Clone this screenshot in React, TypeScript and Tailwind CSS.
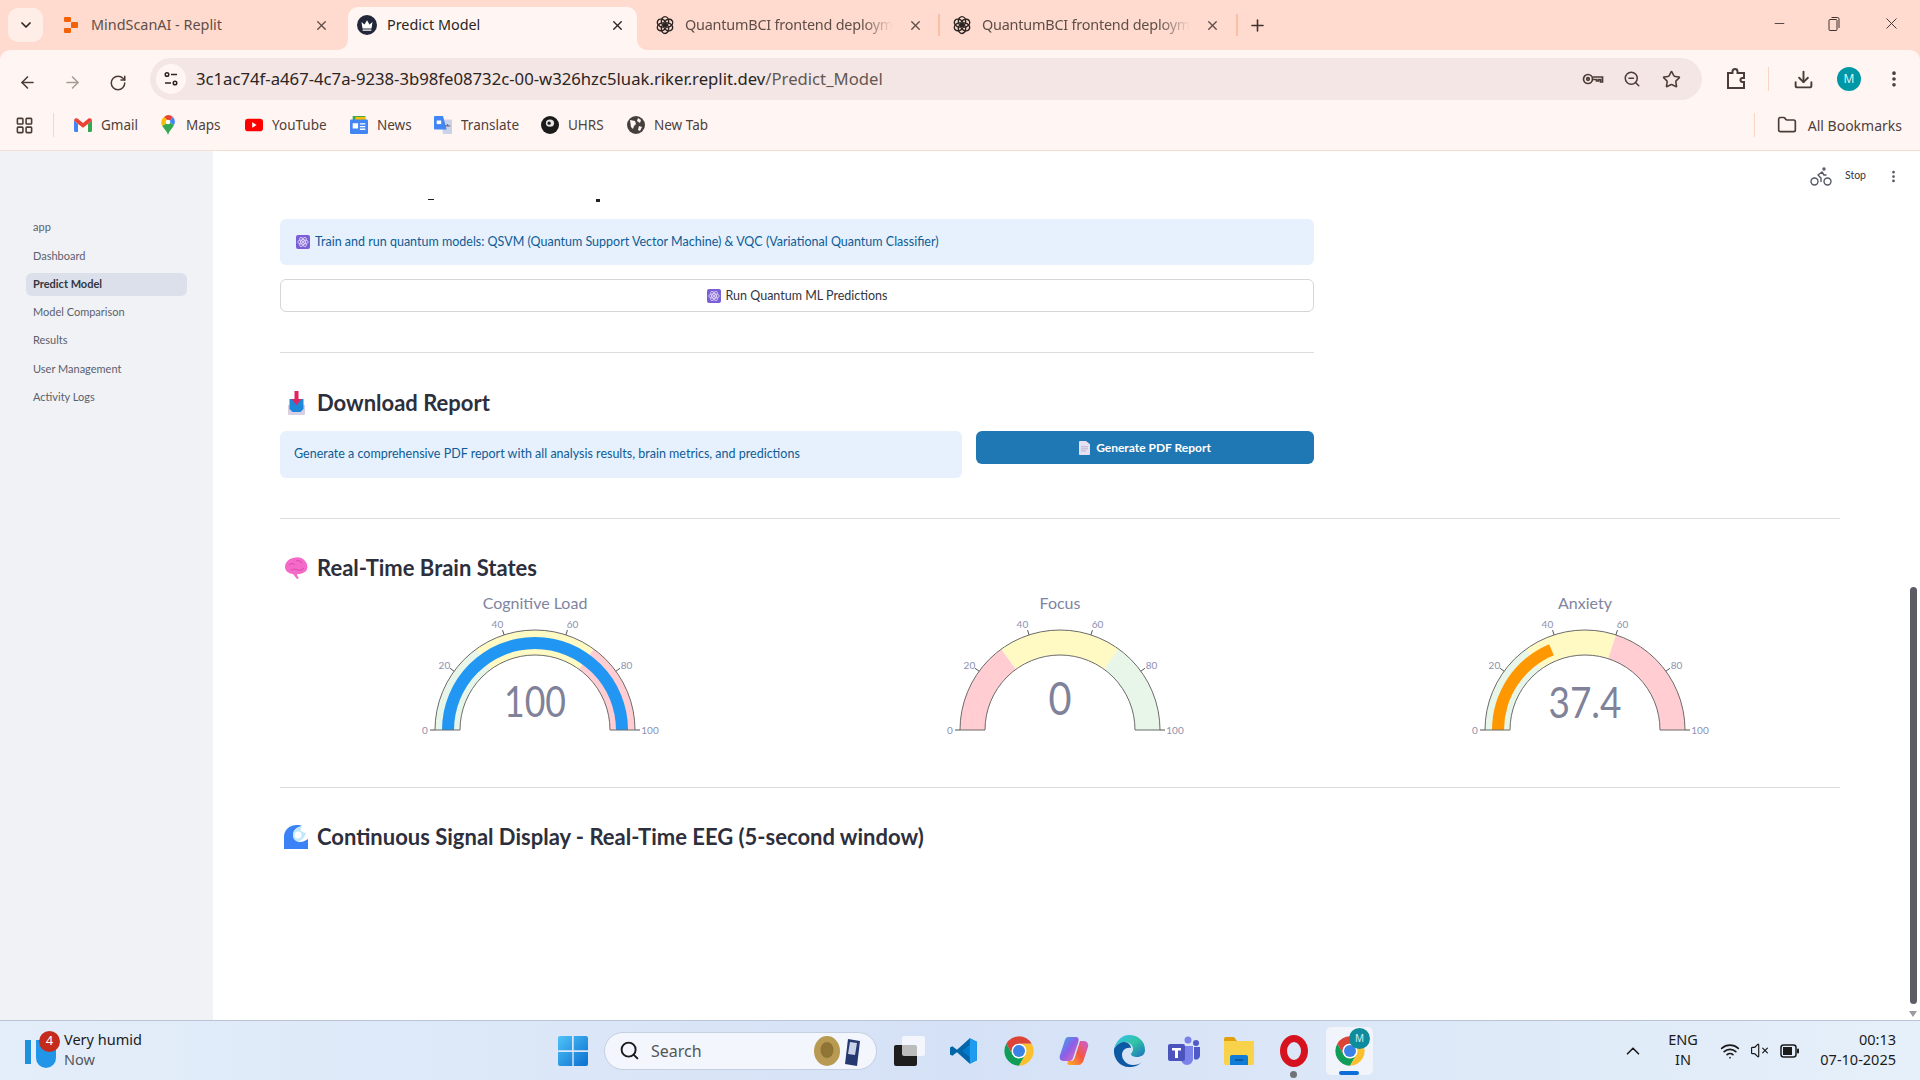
import React from "react";
import {
  ArrowLeft,
  ArrowRight,
  RotateCw,
  ZoomOut,
  Star,
  Download,
  EllipsisVertical,
  Folder,
  Plus,
  X,
  ChevronDown,
  ChevronUp,
  Minus,
  Search,
  Wifi,
  VolumeX,
  LayoutGrid,
  Bike,
} from "lucide-react";

const ui = "font-['Noto_Sans',sans-serif]";
const page = "font-['Lato','Noto_Sans',sans-serif]";

function ChromeLogo({ size = 32 }: { size?: number }) {
  return (
    <svg width={size} height={size} viewBox="0 0 48 48">
      <path fill="#db4437" d="M43.05 13A22 22 0 0 0 4.97 13L14.47 29.5A11 11 0 0 1 24 13Z" />
      <path fill="#0f9d58" d="M4.97 13A22 22 0 0 0 24 46L33.53 29.5A11 11 0 0 1 14.47 29.5Z" />
      <path fill="#fbc02d" d="M24 46A22 22 0 0 0 43.05 13L24 13A11 11 0 0 1 33.53 29.5Z" />
      <circle cx="24" cy="24" r="11" fill="#fff" />
      <circle cx="24" cy="24" r="9" fill="#3b82e6" />
    </svg>
  );
}

function OpenAiLogo() {
  return (
    <svg width="20" height="20" viewBox="0 0 24 24" fill="none" stroke="#2b2523" strokeWidth="1.7">
      <ellipse cx="12" cy="7.5" rx="4.4" ry="5.6" />
      <ellipse cx="12" cy="7.5" rx="4.4" ry="5.6" transform="rotate(60 12 12)" />
      <ellipse cx="12" cy="7.5" rx="4.4" ry="5.6" transform="rotate(120 12 12)" />
      <ellipse cx="12" cy="7.5" rx="4.4" ry="5.6" transform="rotate(180 12 12)" />
      <ellipse cx="12" cy="7.5" rx="4.4" ry="5.6" transform="rotate(240 12 12)" />
      <ellipse cx="12" cy="7.5" rx="4.4" ry="5.6" transform="rotate(300 12 12)" />
    </svg>
  );
}

function ReplitLogo() {
  return (
    <svg width="16" height="16" viewBox="0 0 16 16" fill="#f26207">
      <rect x="1" y="0" width="7" height="5" rx="1" />
      <rect x="8" y="5" width="7" height="6" rx="1" />
      <rect x="1" y="11" width="7" height="5" rx="1" />
    </svg>
  );
}

function CrownLogo() {
  return (
    <svg width="20" height="20" viewBox="0 0 20 20">
      <circle cx="10" cy="10" r="10" fill="#23273a" />
      <path fill="#fff" d="M4.5 7l3 2.4L10 5.2l2.5 4.2 3-2.4-1 6.6h-9zM5.7 14.6h8.6v1.2H5.7z" />
    </svg>
  );
}

function AtomEmoji({ size = 14 }: { size?: number }) {
  return (
    <svg width={size} height={size} viewBox="0 0 14 14" fill="none">
      <rect width="14" height="14" rx="2" fill="#7a5fd6" />
      <g stroke="#e6def9" strokeWidth="0.8">
        <ellipse cx="7" cy="7" rx="5.2" ry="2.1" />
        <ellipse cx="7" cy="7" rx="5.2" ry="2.1" transform="rotate(60 7 7)" />
        <ellipse cx="7" cy="7" rx="5.2" ry="2.1" transform="rotate(120 7 7)" />
      </g>
      <circle cx="7" cy="7" r="1.1" fill="#e6def9" />
    </svg>
  );
}

function TrayEmoji() {
  return (
    <svg width="19" height="24" viewBox="0 0 19 24">
      <path fill="#d8cfe4" d="M1 14h17v9a1 1 0 0 1-1 1H2a1 1 0 0 1-1-1z" />
      <path fill="#1e88d8" d="M2.5 8h14v10l-3 3h-8l-3-3z" />
      <path fill="#e0245e" d="M7.5 0h4v8h3l-5 6-5-6h3z" />
    </svg>
  );
}

function BrainEmoji() {
  return (
    <svg width="24" height="24" viewBox="0 0 24 24">
      <path
        fill="#f56ac8"
        d="M1 11c0-4 3-8 8-9 5-2 10 0 12 3 3 3 3 8 1 10-2 2-5 3-7 3l-2 0c0 2 1 3 2 4l-2 1-4-5c-4 0-8-3-8-7z"
      />
      <path
        fill="none"
        stroke="#d948a8"
        strokeWidth="1"
        d="M5 9c2-2 4-2 6 0M12 5c2-1 5 0 6 2M7 14c2-1 5-1 7 0 2 1 4 0 6-2"
      />
    </svg>
  );
}

function WaveEmoji() {
  return (
    <svg width="24" height="24" viewBox="0 0 24 24">
      <path fill="#3b82f6" d="M0 24V12C0 5 5 0 13 0c2 0 4 0 5 1-5 1-9 4-9 9 0 4 3 7 7 7 3 0 5-1 8-3v10z" />
      <path fill="#bfe6fb" d="M9 10c0-5 4-8 9-9-1 2-2 3-1 5 2 1 3 2 5 2-1 2-1 3-2 4-2 3-5 5-7 4-3-1-4-3-4-6z" />
      <circle cx="14" cy="10" r="3.5" fill="#fff" />
    </svg>
  );
}

function DocEmoji() {
  return (
    <svg width="11" height="14" viewBox="0 0 11 17" preserveAspectRatio="none">
      <path fill="#e6e0f0" d="M0 1a1 1 0 0 1 1-1h6l4 4v12a1 1 0 0 1-1 1H1a1 1 0 0 1-1-1z" />
      <path stroke="#b8aed0" strokeWidth="1" d="M2 7h7M2 9.5h7M2 12h5" />
    </svg>
  );
}

function polar(cx: number, cy: number, r: number, v: number) {
  const a = Math.PI * (1 - v / 100);
  return [cx + r * Math.cos(a), cy - r * Math.sin(a)];
}

function sector(cx: number, cy: number, r0: number, r1: number, from: number, to: number) {
  const [ax, ay] = polar(cx, cy, r1, from);
  const [bx, by] = polar(cx, cy, r1, to);
  const [dx, dy] = polar(cx, cy, r0, to);
  const [ex, ey] = polar(cx, cy, r0, from);
  return `M${ax} ${ay}A${r1} ${r1} 0 0 1 ${bx} ${by}L${dx} ${dy}A${r0} ${r0} 0 0 0 ${ex} ${ey}Z`;
}

interface GaugeProps {
  title: string;
  value: number;
  label: string;
  barColor?: string;
  steps: [number, number, string][];
  valueY: number;
  valueSize: number;
  valueWidth: number;
}

// small nudges so the tick labels sit where plotly anchors them
const labelShift: Record<number, [number, number]> = {
  0: [0, 0],
  20: [0, 1],
  40: [-3, 1],
  60: [3, 1],
  80: [1, 1],
  100: [3, 0],
};

function Gauge({ title, value, label, barColor, steps, valueY, valueSize, valueWidth }: GaugeProps) {
  const cx = 200;
  const cy = 150;
  return (
    <div className="flex justify-center">
      <svg width="400" height="170" viewBox="0 0 400 170" className={page}>
        <text x={cx} y="29" textAnchor="middle" fontSize="16" fill="#7f84a0">
          {title}
        </text>
        {steps.map(([a, b, c]) => (
          <path key={a} d={sector(cx, cy, 75, 100, a, b)} fill={c} />
        ))}
        {barColor && <path d={sector(cx, cy, 81, 93, 0, value)} fill={barColor} />}
        <path d={sector(cx, cy, 75, 100, 0, 100)} fill="none" stroke="#6b6b6b" strokeWidth="1" />
        {[0, 20, 40, 60, 80, 100].map((t) => {
          const [x0, y0] = polar(cx, cy, 100, t);
          const [x1, y1] = polar(cx, cy, 105, t);
          const [lx, ly] = polar(cx, cy, t === 0 ? 110 : 112, t);
          const [sx, sy] = labelShift[t];
          return (
            <g key={t}>
              <line x1={x0} y1={y0} x2={x1} y2={y1} stroke="#555" strokeWidth="1" />
              <text x={lx + sx} y={ly + 4 + sy} textAnchor="middle" fontSize="10" fill="#8d90b0">
                {t}
              </text>
            </g>
          );
        })}
        <text
          x={cx}
          y={valueY}
          textAnchor="middle"
          fontSize={valueSize}
          fill="#7f8299"
          textLength={valueWidth}
          lengthAdjust="spacingAndGlyphs"
        >
          {label}
        </text>
      </svg>
    </div>
  );
}

function Heading({ icon, text }: { icon: React.ReactNode; text: string }) {
  return (
    <div className="flex h-[30px] items-center">
      <div className="flex w-[37px] justify-center pr-[6px] pl-[1px]">{icon}</div>
      <h2 className="text-[22px] leading-[30px] font-bold text-[#2d2f3d]">{text}</h2>
    </div>
  );
}

function Tab({
  icon,
  title,
  active,
  fade,
}: {
  icon: React.ReactNode;
  title: string;
  active?: boolean;
  fade?: boolean;
}) {
  return (
    <div
      className={`relative flex h-[43px] w-[289px] items-center rounded-t-[10px] pb-[7px] pl-[8px] pr-[12px] ${
        active ? "bg-[#fff6f3]" : ""
      }`}
    >
      {active && (
        <>
          <svg width="10" height="10" viewBox="0 0 10 10" className="absolute bottom-0 -left-[10px]">
            <path fill="#fff6f3" d="M10 0v10H0a10 10 0 0 0 10-10z" />
          </svg>
          <svg width="10" height="10" viewBox="0 0 10 10" className="absolute -right-[10px] bottom-0">
            <path fill="#fff6f3" d="M0 0v10h10A10 10 0 0 1 0 0z" />
          </svg>
        </>
      )}
      <div className="flex w-[22px] justify-center">{icon}</div>
      <span
        className={`ml-[9px] overflow-hidden text-[14.4px] whitespace-nowrap ${
          active ? "text-[#2b2523]" : "text-[#5f4e48]"
        } ${fade ? "w-[208px] tracking-[-0.2px] [mask-image:linear-gradient(to_right,black_85%,transparent)]" : ""}`}
      >
        {title}
      </span>
      <X size={15} strokeWidth={2.2} className={`ml-auto ${active ? "text-[#2b2523]" : "text-[#5f4e48]"}`} />
    </div>
  );
}

function Bookmark({ icon, label, width }: { icon: React.ReactNode; label: string; width: string }) {
  return (
    <div className={`flex items-center ${width}`}>
      <div className="flex w-[18px] justify-center">{icon}</div>
      <span className="ml-[9px] text-[13.5px] text-[#4f403b]">{label}</span>
    </div>
  );
}

const sideItems = ["app", "Dashboard", "Predict Model", "Model Comparison", "Results", "User Management", "Activity Logs"];

function App() {
  return (
    <div className={`flex h-screen w-[1920px] flex-col overflow-hidden bg-[#ffdbcf] ${ui}`}>
      {/* tab strip */}
      <div className="flex h-[50px] shrink-0 items-end pl-[8px]">
        <div className="mb-[8px] flex h-[34px] w-[35px] items-center justify-center rounded-[10px] bg-[#ffeee8]">
          <ChevronDown size={16} strokeWidth={2.6} className="text-[#2b2523]" />
        </div>
        <div className="ml-[9px]">
          <Tab icon={<ReplitLogo />} title="MindScanAI - Replit" />
        </div>
        <div className="ml-[7px]">
          <Tab icon={<CrownLogo />} title="Predict Model" active />
        </div>
        <div className="ml-[9px]">
          <Tab icon={<OpenAiLogo />} title="QuantumBCI frontend deployment" fade />
        </div>
        <div className="mb-[14px] ml-[3px] h-[22px] w-[2px] bg-[#fbbfa9]" />
        <div className="ml-[3px]">
          <Tab icon={<OpenAiLogo />} title="QuantumBCI frontend deployment" fade />
        </div>
        <div className="mb-[14px] ml-[4px] h-[22px] w-[2px] bg-[#fbbfa9]" />
        <Plus size={19} strokeWidth={2} className="mb-[15px] ml-[10px] text-[#3f332f]" />
        <div className="mb-[17px] ml-auto flex items-center text-[#3f332f]">
          <Minus size={15} strokeWidth={1.4} />
          <svg width="14" height="16" viewBox="0 0 14 16" fill="none" stroke="#3f332f" className="ml-[40px]">
            <rect x="2" y="3.5" width="8" height="11" rx="1" />
            <path d="M4.5 1.5h6a1.5 1.5 0 0 1 1.500 1.500v9" />
          </svg>
          <X size={19} strokeWidth={1.2} className="mr-[19px] ml-[41px]" />
        </div>
      </div>

      {/* toolbar */}
      <div className="flex h-[50px] shrink-0 items-end rounded-t-[10px] bg-[#fff6f3] pl-[18px]">
        <div className="mb-[8px] flex items-center">
          <ArrowLeft size={19} className="text-[#4b3c37]" />
          <ArrowRight size={19} className="ml-[26px] text-[#a99a95]" />
          <RotateCw size={18} className="ml-[27px] text-[#4b3c37]" />
        </div>
        <div className="ml-[23px] flex h-[42px] w-[1552px] items-center rounded-full bg-[#f3e6e4] pl-[6px]">
          <div className="flex h-[30px] w-[30px] items-center justify-center rounded-full bg-[#fff6f3]">
            <svg width="16" height="16" viewBox="0 0 16 16" fill="none" stroke="#2b2523" strokeWidth="1.5">
              <circle cx="4" cy="3.500" r="1.800" />
              <path d="M8 3.500h6M2 12h6" />
              <circle cx="12" cy="12" r="1.800" />
            </svg>
          </div>
          <span className="ml-[10px] text-[16.7px] text-[#2b2523]">
            3c1ac74f-a467-4c7a-9238-3b98fe08732c-00-w326hzc5luak.riker.replit.dev
            <span className="text-[#655852]">/Predict_Model</span>
          </span>
          <div className="ml-auto mr-[21px] flex items-center text-[#4b3c37]">
            <svg width="22" height="14" viewBox="0 0 22 14" fill="none" stroke="#4b3c37" strokeWidth="1.700">
              <circle cx="6" cy="7" r="4.500" />
              <circle cx="6" cy="7" r="1.300" />
              <path d="M10.500 5h10v5h-2v-2.500h-2V9h-2V7.500h-4" />
            </svg>
            <ZoomOut size={18} className="ml-[19px]" />
            <Star size={19} className="ml-[21px]" />
          </div>
        </div>
        <div className="mb-[9px] ml-[24px] flex items-center text-[#4b3c37]">
          <svg width="20" height="24" viewBox="0 0 20 24" fill="none" stroke="#4b3c37" strokeWidth="2">
            <path d="M2 6h4.500V4.500a2.500 2.500 0 0 1 5 0V6H18v5h-1.500a2 2 0 0 0 0 4H18v6H2z" />
          </svg>
          <div className="ml-[22px] h-[24px] w-[1px] bg-[#fbd4c6]" />
          <Download size={21} className="ml-[24px]" strokeWidth={2.2} />
          <div className="ml-[23px] flex h-[24px] w-[24px] items-center justify-center rounded-full bg-[#0097a7] text-[12px] text-[#d6f2f5]">
            M
          </div>
          <EllipsisVertical size={20} strokeWidth={2.4} className="ml-[23px]" />
        </div>
      </div>

      {/* bookmarks */}
      <div className="flex h-[51px] shrink-0 items-center border-b border-[#f8ddd3] bg-[#fff6f3] pl-[15px]">
        <LayoutGrid size={19} className="text-[#4b3c37]" strokeWidth={2} />
        <div className="ml-[19px] h-[24px] w-[1px] bg-[#fbd4c6]" />
        <div className="ml-[20px] flex items-center">
          <Bookmark
            width="w-[85px]"
            label="Gmail"
            icon={
              <svg width="18" height="14" viewBox="0 0 18 14">
                <path fill="#4285f4" d="M0 2.500v10a1.500 1.500 0 0 0 1.500 1.500H4V6z" />
                <path fill="#34a853" d="M18 2.500v10a1.500 1.500 0 0 1-1.500 1.500H14V6z" />
                <path fill="#ea4335" d="M0 2.500C0 .5 2 -.5 3.500.6L9 5l5.500-4.400C16 -.5 18 .5 18 2.500L14 6 9 9.800 4 6z" />
              </svg>
            }
          />
          <Bookmark
            width="w-[86px]"
            label="Maps"
            icon={
              <svg width="14" height="20" viewBox="0 0 14 20">
                <path fill="#ea4335" d="M7 0a7 7 0 0 1 5 2.100L8 7 3 2a7 7 0 0 1 4-2z" />
                <path fill="#4285f4" d="M12 2.100A7 7 0 0 1 13 10L8 7z" />
                <path fill="#fbbc04" d="M3 2a7 7 0 0 0-1.800 9L8 7z" />
                <path fill="#34a853" d="M1.200 11C3 14 6 16 7 20c1-4 4-6 6-10L8 7z" />
                <circle cx="7" cy="7" r="2.300" fill="#fff" />
              </svg>
            }
          />
          <Bookmark
            width="w-[105px]"
            label="YouTube"
            icon={
              <svg width="20" height="14" viewBox="0 0 20 14">
                <rect width="20" height="14" rx="3.500" fill="#f00" />
                <path fill="#fff" d="M8 4l5 3-5 3z" />
              </svg>
            }
          />
          <Bookmark
            width="w-[84px]"
            label="News"
            icon={
              <svg width="20" height="20" viewBox="0 0 20 20">
                <path fill="#34a853" d="M3 0h14v6H3z" />
                <path fill="#fbbc04" d="M6 1h11v5H6z" />
                <rect y="4" width="20" height="16" rx="1.500" fill="#4285f4" />
                <path fill="#fff" d="M3 8h6v6H3zM11 8h6v1.500h-6zM11 11h6v1.500h-6zM11 14h6v1.500h-6z" />
              </svg>
            }
          />
          <Bookmark
            width="w-[107px]"
            label="Translate"
            icon={
              <svg width="20" height="20" viewBox="0 0 20 20">
                <path fill="#c9d2e6" d="M8 4h11a1 1 0 0 1 1 1v14a1 1 0 0 1-1 1H10z" />
                <path fill="#4285f4" d="M1 0h9l4 15H1a1 1 0 0 1-1-1V1a1 1 0 0 1 1-1z" />
                <path fill="#fff" d="M3 5h5v4H3z" />
                <path stroke="#6b7280" strokeWidth="1.200" d="M12 11h6M15 9v2" />
              </svg>
            }
          />
          <Bookmark
            width="w-[86px]"
            label="UHRS"
            icon={
              <svg width="20" height="20" viewBox="0 0 20 20">
                <circle cx="10" cy="10" r="10" fill="#1b1b1b" />
                <ellipse cx="10" cy="8" rx="4.500" ry="4" fill="#e6e6e6" />
                <circle cx="9" cy="8" r="1.800" fill="#1b1b1b" />
              </svg>
            }
          />
          <Bookmark
            width="w-[90px]"
            label="New Tab"
            icon={
              <svg width="18" height="18" viewBox="0 0 18 18">
                <circle cx="9" cy="9" r="9" fill="#45403e" />
                <path fill="#fff6f3" d="M3 4l5 1 1 3-2 2-1 3-2-2zM11 2l3 2-1 3-3-2zM12 10l3 1-2 4-2-1z" />
              </svg>
            }
          />
        </div>
        <div className="ml-auto flex items-center pr-[18px]">
          <div className="h-[24px] w-[1px] bg-[#fbd4c6]" />
          <Folder size={20} className="ml-[22px] text-[#4b3c37]" />
          <span className="ml-[11px] text-[14px] text-[#4f403b]">All Bookmarks</span>
        </div>
      </div>

      {/* streamlit page */}
      <div className={`relative flex min-h-0 flex-1 bg-white ${page}`}>
        <aside className="flex w-[213px] shrink-0 flex-col bg-[#f0f2f6] pt-[65px] pl-[26px]">
          {sideItems.map((item) => (
            <div
              key={item}
              className={`mb-[5.300px] flex h-[23px] w-[161px] items-center rounded-[6px] pl-[7px] text-[11px] ${
                item === "Predict Model" ? "bg-[#dbe0ea] font-bold text-[#33353f]" : "text-[#5c5f6c]"
              }`}
            >
              {item}
            </div>
          ))}
        </aside>

        <main className="min-w-0 flex-1 pt-[48px] pr-[80px] pl-[67px]">
          <div className="flex h-[3px] w-[1034px]">
            <div className="ml-[148px] h-[1px] w-[6px] bg-[#222]" />
            <div className="ml-[162px] h-[3px] w-[4px] bg-[#222]" />
          </div>

          <div className="mt-[17px] w-[1034px]">
            <div className="flex h-[46px] items-center rounded-[6px] bg-[#e6f1fd] pl-[16px] text-[12.5px] text-[#0f5c96]">
              <AtomEmoji />
              <span className="ml-[5px]">
                Train and run quantum models: QSVM (Quantum Support Vector Machine) &amp; VQC (Variational Quantum Classifier)
              </span>
            </div>
            <button className="mt-[14px] flex h-[33px] w-full items-center justify-center rounded-[6px] border border-[#d5d6da] bg-white pt-[1px] text-[12.5px] text-[#33353f]">
              <AtomEmoji />
              <span className="ml-[5px]">Run Quantum ML Predictions</span>
            </button>
            <hr className="mt-[40px] border-[#dcdcdf]" />
            <div className="mt-[35px]">
              <Heading icon={<TrayEmoji />} text="Download Report" />
            </div>
            <div className="mt-[13px] flex gap-[14px]">
              <div className="flex h-[47px] flex-1 items-center rounded-[6px] bg-[#e6f1fd] pl-[14px] text-[12.5px] text-[#0f5c96]">
                Generate a comprehensive PDF report with all analysis results, brain metrics, and predictions
              </div>
              <button className="flex h-[33px] w-[338px] items-center justify-center rounded-[6px] bg-[#1f77b4] pt-[1px] text-[12px] font-bold text-white">
                <DocEmoji />
                <span className="ml-[6px]">Generate PDF Report</span>
              </button>
            </div>
          </div>

          <hr className="mt-[40px] border-[#dcdcdf]" />
          <div className="mt-[34px]">
            <Heading icon={<BrainEmoji />} text="Real-Time Brain States" />
          </div>
          <div className="-mt-[3px] grid grid-cols-3 gap-4">
            <Gauge
              title="Cognitive Load"
              value={100}
              label="100"
              barColor="#2196f3"
              steps={[
                [0, 30, "#e8f5e9"],
                [30, 70, "#fff9c4"],
                [70, 100, "#ffcdd2"],
              ]}
              valueY={137}
              valueSize={42}
              valueWidth={62}
            />
            <Gauge
              title="Focus"
              value={0}
              label="0"
              steps={[
                [0, 30, "#ffcdd2"],
                [30, 70, "#fff9c4"],
                [70, 100, "#e8f5e9"],
              ]}
              valueY={135}
              valueSize={46}
              valueWidth={23}
            />
            <Gauge
              title="Anxiety"
              value={37.4}
              label="37.4"
              barColor="#ff9800"
              steps={[
                [0, 30, "#e8f5e9"],
                [30, 60, "#fff9c4"],
                [60, 100, "#ffcdd2"],
              ]}
              valueY={138}
              valueSize={42}
              valueWidth={73}
            />
          </div>
          <hr className="mt-[37px] border-[#dcdcdf]" />
          <div className="mt-[34px]">
            <Heading icon={<WaveEmoji />} text="Continuous Signal Display - Real-Time EEG (5-second window)" />
          </div>
        </main>

        {/* streamlit header overlay */}
        <div className="absolute top-[13px] right-[19px] flex items-center text-[#555864]">
          <Bike size={24} strokeWidth={1.400} />
          <span className="ml-[12px] text-[10.500px] text-[#33353f]">Stop</span>
          <EllipsisVertical size={15} strokeWidth={2.400} className="ml-[20px]" />
        </div>

        {/* scrollbar */}
        <div className="absolute top-[436px] right-[3px] h-[417px] w-[7px] rounded-full bg-[#5b5c66]" />
        <div className="absolute right-[3px] bottom-[3px] h-0 w-0 border-x-[4px] border-t-[6px] border-x-transparent border-t-[#9a9ba2]" />
      </div>

      {/* taskbar */}
      <div className="relative flex h-[60px] shrink-0 items-center border-t border-[#b9c4d6] bg-gradient-to-r from-[#e4eefa] via-[#d5e1f6] to-[#e6f0fa] text-[14.500px] text-[#1b1b1b]">
        <div className="relative ml-[25px] flex h-[46px] w-[34px] items-end">
          <div className="mb-[10px] h-[24px] w-[6px] bg-[#1f8fe0]" />
          <div className="mb-[6px] ml-[5px] h-[28px] w-[20px] rounded-t-[10px] rounded-b-full bg-[#2196e8]" />
          <div className="absolute top-[3px] left-[14px] flex h-[21px] w-[21px] items-center justify-center rounded-full bg-[#c42b1c] text-[13px] text-white">
            4
          </div>
        </div>
        <div className="mb-[4px] ml-[5px] flex w-[90px] flex-col leading-[20px]">
          <span>Very humid</span>
          <span className="text-[#55585f]">Now</span>
        </div>

        <svg width="30" height="30" viewBox="0 0 30 30" className="ml-[404px]">
          <defs>
            <linearGradient id="win" x1="0" y1="0" x2="1" y2="1">
              <stop offset="0" stopColor="#4fc3f7" />
              <stop offset="1" stopColor="#0a6fd0" />
            </linearGradient>
          </defs>
          <path fill="url(#win)" d="M0 2a2 2 0 0 1 2-2h12v14.300H0zM15.700 0H28a2 2 0 0 1 2 2v12.300H15.700zM0 16h14.300v14H2a2 2 0 0 1-2-2zM15.700 16H30v12a2 2 0 0 1-2 2H15.700z" />
        </svg>

        <div className="ml-[16px] flex h-[38px] w-[273px] items-center rounded-full border border-[#c5cfe2] bg-[#f3f6fd] pl-[14px]">
          <Search size={21} strokeWidth={2.200} className="text-[#1b1b1b]" />
          <span className="ml-[11px] text-[16px] text-[#555]">Search</span>
          <svg width="50" height="32" viewBox="0 0 50 32" className="mr-[13px] ml-auto">
            <ellipse cx="14" cy="16" rx="13" ry="15" fill="#b89a52" />
            <ellipse cx="14" cy="15" rx="6.500" ry="8" fill="#8f7435" />
            <path fill="#25386f" d="M35 4l12 2-3 25-12-2z" />
            <path fill="#c9d2e6" d="M37 7l7 1-2 12-7-1z" />
          </svg>
        </div>

        <div className="relative ml-[17px] h-[30px] w-[32px]">
          <div className="absolute bottom-0 left-0 h-[21px] w-[23px] rounded-[2px] bg-[#1e1e1e]" />
          <div className="absolute top-0 left-[8px] h-[20px] w-[23px] rounded-[2px] bg-white/70" />
        </div>

        <svg width="28" height="28" viewBox="0 0 24 24" className="ml-[24px]">
          <path fill="#0065a9" d="M17 1l6 3v16l-6 3L6 13l-4 3-2-1V9l2-1 4 3z" />
          <path fill="#1f9cf0" d="M17 1l6 3v16l-6 3zM17 7l-6 5 6 5z" />
          <path fill="#007acc" d="M17 7v10l-6-5z" />
        </svg>

        <div className="ml-[25px]">
          <ChromeLogo size={32} />
        </div>

        <svg width="32" height="32" viewBox="0 0 32 32" className="ml-[23px]">
          <defs>
            <linearGradient id="cp1" x1="0" y1="0" x2="1" y2="1">
              <stop offset="0" stopColor="#2bb3e8" />
              <stop offset="0.500" stopColor="#8d5ee8" />
              <stop offset="1" stopColor="#f06ab0" />
            </linearGradient>
            <linearGradient id="cp2" x1="0" y1="1" x2="1" y2="0">
              <stop offset="0" stopColor="#ffb02e" />
              <stop offset="0.500" stopColor="#f4573f" />
              <stop offset="1" stopColor="#c85fe0" />
            </linearGradient>
          </defs>
          <path fill="url(#cp1)" d="M10 2h8c3 0 3 3 2 6l-5 15c-1 3-3 3-5 3H6c-4 0-5-3-4-6l4-12c1-4 2-6 4-6z" />
          <path fill="url(#cp2)" d="M22 6h4c3 0 5 3 4 6l-4 12c-1 4-3 6-6 6h-8c-3 0-3-2-2-4h3c2 0 3-1 4-4z" />
        </svg>

        <svg width="32" height="32" viewBox="0 0 32 32" className="ml-[23px]">
          <defs>
            <linearGradient id="edge" x1="0" y1="0" x2="1" y2="1">
              <stop offset="0" stopColor="#35c1f1" />
              <stop offset="0.500" stopColor="#31c4a5" />
              <stop offset="1" stopColor="#1a6fc0" />
            </linearGradient>
          </defs>
          <path fill="url(#edge)" d="M16 0c9 0 16 6 16 15 0 5-4 7-8 7-3 0-6-1-6-3 0-1 2-2 2-5 0-4-4-7-8-7-5 0-9 3-11 7C3 6 9 0 16 0z" />
          <path fill="#0c59a4" d="M1 14c3-5 7-7 10-7 4 0 7 3 7 6-5-1-9 2-9 7 0 5 5 10 11 10 4 0 7-1 9-3-3 3-7 5-13 5C7 32 0 24 1 14z" />
        </svg>

        <svg width="32" height="30" viewBox="0 0 32 30" className="ml-[23px]">
          <circle cx="20" cy="4" r="3.500" fill="#7b83eb" />
          <circle cx="28" cy="7" r="3" fill="#5059c9" />
          <path fill="#7b83eb" d="M12 10h13v13a6 6 0 0 1-12 0z" />
          <path fill="#5059c9" d="M26 11h6v9a4 4 0 0 1-6 3z" />
          <rect y="8" width="17" height="17" rx="2" fill="#4b53bc" />
          <path fill="#fff" d="M4 12h9v2.500h-3V22H7v-7.500H4z" />
        </svg>

        <svg width="30" height="30" viewBox="0 0 30 30" className="ml-[24px]">
          <path fill="#e0a10d" d="M0 3a2 2 0 0 1 2-2h8l3 4h-13z" />
          <path fill="#f9d24b" d="M0 5h30v22a2 2 0 0 1-2 2H2a2 2 0 0 1-2-2z" />
          <path fill="#0f7dd8" d="M6 29V21a2 2 0 0 1 2-2h14a2 2 0 0 1 2 2v8z" />
          <path stroke="#0a4f96" strokeWidth="1.500" d="M11 24h8" />
        </svg>

        <div className="relative ml-[25px] flex h-[32px] w-[30px] items-center justify-center">
          <div className="h-[32px] w-[28px] rounded-[50%] border-[7px] border-[#d6121f]" />
          <div className="absolute top-[36px] left-[11px] h-[7px] w-[7px] rounded-full bg-[#6f7276]" />
        </div>

        <div className="relative ml-[17px] flex h-[48px] w-[47px] items-center justify-center rounded-[5px] bg-[#f1f4fb]">
          <ChromeLogo size={32} />
          <div className="absolute top-[1px] right-[3px] flex h-[21px] w-[21px] items-center justify-center rounded-full bg-[#0e8b9c] text-[10px] text-[#cdeef2]">
            M
          </div>
          <div className="absolute bottom-[0px] left-[13px] h-[4px] w-[20px] rounded-full bg-[#0a6fd8]" />
        </div>

        <ChevronUp size={22} strokeWidth={1.800} className="ml-[249px] text-[#1b1b1b]" />
        <div className="mb-[4px] ml-[19px] flex w-[40px] flex-col items-center leading-[20px]">
          <span>ENG</span>
          <span>IN</span>
        </div>
        <Wifi size={20} className="ml-[17px]" />
        <VolumeX size={19} strokeWidth={1.500} className="ml-[10px]" />
        <svg width="20" height="14" viewBox="0 0 20 14" className="ml-[11px]">
          <rect x="1" y="1" width="15" height="12" rx="2.500" fill="none" stroke="#1b1b1b" strokeWidth="1.500" />
          <rect x="3" y="3" width="9" height="8" fill="#1b1b1b" />
          <rect x="17" y="4.500" width="2" height="5" rx="1" fill="#1b1b1b" />
        </svg>
        <div className="mr-[24px] mb-[4px] ml-auto flex flex-col items-end leading-[20px]">
          <span>00:13</span>
          <span>07-10-2025</span>
        </div>
      </div>
    </div>
  );
}

export default App;
